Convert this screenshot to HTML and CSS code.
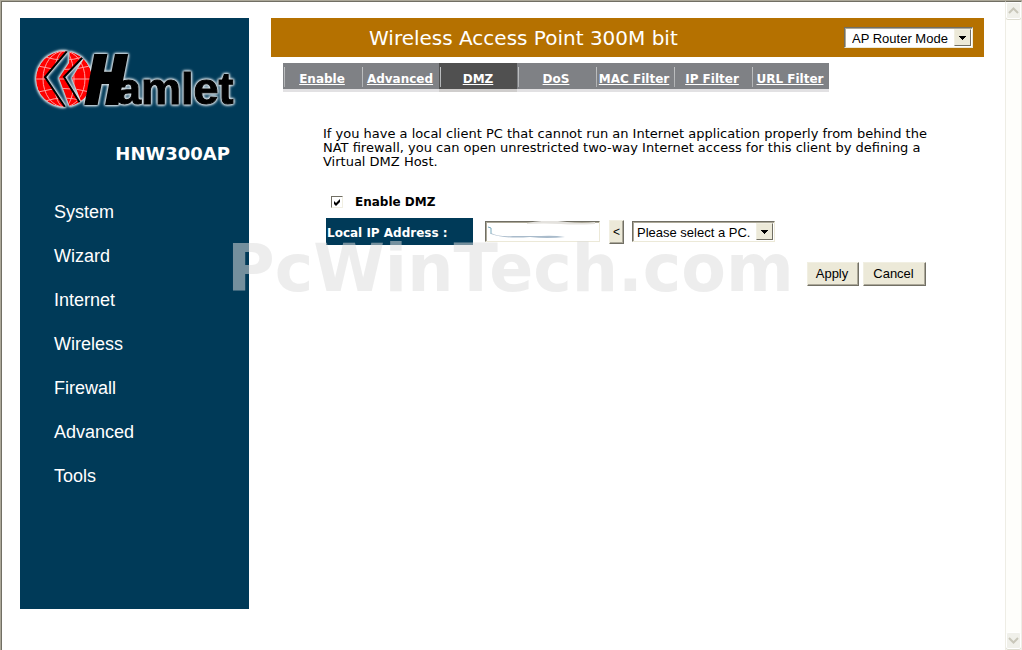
FILE: index.html
```html
<!DOCTYPE html>
<html lang="en">
<head>
  <meta charset="UTF-8">
  <meta name="viewport" content="width=device-width, initial-scale=1.0">
  <title>Wireless Access Point 300M bit</title>
  <link rel="stylesheet" href="styles.css">
</head>
<body>
  <div class="page">
    <div class="sidebar">
      <svg class="logo" width="206" height="66" viewBox="0 0 206 66" role="img" aria-label="Hamlet">
        <defs>
          <clipPath id="globe"><circle cx="30" cy="33" r="28"/></clipPath>
          <clipPath id="slices">
            <path d="M0 0H36L11 31L32 64H0Z"/>
            <path d="M36 0L49 11L30 31L46 57L37 64L25 32L35 17Z"/>
            <path d="M51 11L38 32L48 58H62V11Z"/>
          </clipPath>
        </defs>
        <g class="logo-glow">
          <g clip-path="url(#globe)">
            <g clip-path="url(#slices)">
              <circle cx="30" cy="33" r="28" fill="#f00"/>
              <g fill="none" stroke="#ff9d9d" stroke-width="1">
                <ellipse cx="30" cy="33" rx="21" ry="28"/>
                <ellipse cx="30" cy="33" rx="10" ry="28"/>
                <path d="M2 33H58 M4 20Q30 27 56 20 M4 46Q30 39 56 46 M11 11Q30 17 49 11 M11 55Q30 49 49 55"/>
              </g>
            </g>
            <path fill="none" stroke="#000" stroke-width="2" d="M33 5L11 31L31 61M49 11L30 31L46 57"/>
          </g>
          <text class="logo-cap" x="53" y="57">H</text>
          <text class="logo-text" x="82" y="58">amlet</text>
        </g>
      </svg>
      <div class="model">HNW300AP</div>
      <ul class="menu">
        <li><a href="#">System</a></li>
        <li><a href="#">Wizard</a></li>
        <li><a href="#">Internet</a></li>
        <li><a href="#">Wireless</a></li>
        <li><a href="#">Firewall</a></li>
        <li><a href="#">Advanced</a></li>
        <li><a href="#">Tools</a></li>
      </ul>
    </div>

    <div class="main">
      <header class="title-bar">
        <h1>Wireless Access Point 300M bit</h1>
        <span class="select-box mode">
          <select aria-label="Operation mode">
            <option>AP Router Mode</option>
          </select>
          <svg class="arrow" viewBox="0 0 15 15"><path d="M4 6h7v1h-1v1h-1v1h-1v1h-1v-1h-1v-1h-1v-1h-1z"/></svg>
        </span>
      </header>

      <nav class="tabs">
        <a href="#">Enable</a>
        <a href="#">Advanced</a>
        <a href="#" class="active">DMZ</a>
        <a href="#">DoS</a>
        <a href="#">MAC Filter</a>
        <a href="#">IP Filter</a>
        <a href="#">URL Filter</a>
      </nav>

      <form class="content">
        <p>If you have a local client PC that cannot run an Internet application properly from behind the NAT firewall, you can open unrestricted two-way Internet access for this client by defining a Virtual DMZ Host.</p>

        <div class="enable-row">
          <input type="checkbox" id="enableDmz" checked>
          <label for="enableDmz">Enable DMZ</label>
        </div>

        <div class="ip-row">
          <label for="localIp">Local IP Address :</label>
          <span class="ip-box">
            <input type="text" id="localIp">
            <svg class="smudge" viewBox="0 0 115 21">
              <path d="M3 6l3 1v6" fill="none" stroke="#79aabd" stroke-width="1"/>
              <path d="M6 12Q14 16 28 15H56Q68 14 80 16Q62 18 45 16Q20 18 6 13Z" fill="#a9bbcb"/>
              <path d="M42 2Q62 -2 82 1Q98 3 110 1V3Q90 4 76 3Q58 2 42 3Z" fill="#e4e2de"/>
            </svg>
          </span>
          <button type="button" class="copy">&lt;</button>
          <span class="select-box client">
            <select aria-label="Client PC">
              <option>Please select a PC.</option>
            </select>
            <svg class="arrow" viewBox="0 0 15 15"><path d="M4 6h7v1h-1v1h-1v1h-1v1h-1v-1h-1v-1h-1v-1h-1z"/></svg>
          </span>
        </div>

        <div class="actions">
          <button type="button" class="apply">Apply</button>
          <button type="button" class="cancel">Cancel</button>
        </div>
      </form>
    </div>
  </div>

  <div class="scrollbar">
    <button type="button" aria-label="Scroll up"><svg width="11" height="7" viewBox="0 0 11 7"><path d="M1 6L5.500 1.500L10 6"/></svg></button>
    <button type="button" aria-label="Scroll down"><svg width="11" height="7" viewBox="0 0 11 7"><path d="M1 1L5.500 5.500L10 1"/></svg></button>
  </div>

  <div class="watermark">PcWinTech.com</div>
</body>
</html>
```
FILE: styles.css
```css
* {
  box-sizing: border-box;
}
body {
  margin: 0;
  display: flex;
  min-height: 100vh;
  border-top: 1px solid #aca899;
  border-left: 1px solid #aca899;
  background-color: #fff;
  font-family: "DejaVu Sans", Verdana, sans-serif;
  font-size: 12px;
  color: #000;
}
.page {
  flex: 1;
  display: flex;
  align-items: flex-start;
  gap: 22px;
  padding: 16px 21px 16px 18px;
  border-top: 1px solid #716f64;
  border-left: 1px solid #716f64;
}

/* left side */
.sidebar {
  width: 229px;
  padding: 28px 0 111px;
  background-color: #003a58;
  color: #fff;
}
.logo {
  display: block;
  margin-left: 14px;
  overflow: visible;
}
.logo-glow {
  filter: drop-shadow(0 0 1px #dfe8ec) drop-shadow(0 0 1px #dfe8ec) drop-shadow(0 0 1px #9fb4c0);
}
.logo-cap {
  font: italic bold 64px "DejaVu Sans Mono", monospace;
  stroke: #000;
  stroke-width: 4px;
}
.logo-text {
  font: bold 45px "Liberation Sans", Arial, sans-serif;
  stroke: #000;
  stroke-width: 1px;
}
.model {
  margin-top: 31px;
  padding-right: 19px;
  font-size: 18px;
  line-height: 22px;
  font-weight: bold;
  text-align: right;
}
.menu {
  margin: 25px 0 0;
  padding: 0 0 0 34px;
  list-style: none;
}
.menu a {
  display: block;
  font-family: "Liberation Sans", Arial, sans-serif;
  font-size: 18px;
  line-height: 44px;
  color: #fff;
  text-decoration: none;
}

/* right side */
.main {
  flex: 1;
}
.title-bar {
  display: flex;
  align-items: center;
  justify-content: space-between;
  height: 39px;
  padding: 0 11px 0 98px;
  background-color: #b57100;
  color: #fff;
}
.title-bar h1 {
  margin: 0;
  font-size: 20px;
  font-weight: normal;
}
.tabs {
  display: flex;
  margin: 6px 0 0 12px;
}
.tabs a {
  width: 78px;
  height: 29px;
  padding-top: 4px;
  border-bottom: 3px solid #e2e1e3;
  background: linear-gradient(#c0c2c3, #b0b2b4) 1px 4px / 1px 20px no-repeat padding-box, #7f8185 padding-box;
  font-size: 12px;
  line-height: 24px;
  font-weight: bold;
  text-align: center;
  color: #fff;
}
.tabs a.active {
  border-bottom-color: #cfcdcc;
  background-color: #505050;
}

.content {
  padding: 35px 0 0 52px;
}
.content p {
  max-width: 610px;
  margin: 0;
  font-size: 13px;
  line-height: 14px;
}
.enable-row {
  display: flex;
  align-items: center;
  gap: 12px;
  margin: 25px 0 8px 8px;
  font-weight: bold;
}
.enable-row label {
  padding-top: 1px;
  line-height: 15px;
}
.enable-row input {
  appearance: none;
  width: 12px;
  height: 12px;
  margin: 0;
  border: 1px solid;
  border-color: #716f64 #f1efe2 #f1efe2 #716f64;
}
.enable-row input:checked {
  background: url("data:image/svg+xml,%3Csvg xmlns='http://www.w3.org/2000/svg' viewBox='0 0 10 10'%3E%3Cpath d='M2 4l2 2l4-4v3l-4 4l-2-2z'/%3E%3C/svg%3E");
}
.ip-row {
  display: flex;
  align-items: center;
  margin-left: 3px;
}
.ip-row label {
  width: 147px;
  margin-right: 12px;
  padding: 3px 0 0 1px;
  background-color: #003a58;
  color: #fff;
  font-weight: bold;
  line-height: 24px;
}
.ip-box {
  position: relative;
  display: flex;
  margin-right: 9px;
}
.ip-box input {
  width: 115px;
  height: 21px;
  border: 1px solid;
  border-color: #716f64 #ece9d8 #ece9d8 #716f64;
  box-shadow: inset 1px 1px #aca899;
}
.smudge {
  position: absolute;
  left: 0;
  top: 0;
  width: 115px;
  height: 21px;
  pointer-events: none;
}

button {
  padding: 0;
  border: 1px solid;
  border-color: #f1efe2 #716f64 #716f64 #f1efe2;
  box-shadow: inset -1px -1px #aca899;
  background-color: #ece9d8;
  font-family: "Liberation Sans", Arial, sans-serif;
  font-size: 13px;
  color: #000;
}
.copy {
  width: 15px;
  height: 24px;
  margin-right: 8px;
  font-size: 12px;
}
.select-box {
  position: relative;
  display: flex;
}
.select-box select {
  appearance: none;
  width: 100%;
  height: 21px;
  padding: 1px 20px 0 4px;
  border: 1px solid;
  border-color: #716f64 #ece9d8 #ece9d8 #716f64;
  border-radius: 0;
  box-shadow: inset 1px 1px #aca899;
  background-color: #fff;
  font-family: "Liberation Sans", Arial, sans-serif;
  font-size: 13px;
  color: #000;
}
.select-box .arrow {
  position: absolute;
  right: 2px;
  top: 2px;
  width: 17px;
  height: 17px;
  border: 1px solid;
  border-color: #f1efe2 #716f64 #716f64 #f1efe2;
  background-color: #ece9d8;
  pointer-events: none;
}
.mode {
  width: 129px;
}
.mode select {
  padding-left: 7px;
}
.client {
  width: 143px;
}
.actions {
  display: flex;
  justify-content: flex-end;
  gap: 4px;
  margin: 17px 58px 0 0;
}
.actions button {
  height: 24px;
  padding: 0 2px 1px 0;
}
.apply {
  width: 52px;
}
.cancel {
  width: 63px;
}

.scrollbar {
  display: flex;
  flex-direction: column;
  justify-content: space-between;
  width: 17px;
  padding-bottom: 1px;
  border-top: 1px solid #716f64;
  border-left: 1px solid #eeede5;
  border-right: 1px solid #eeede5;
  background-color: #fefefb;
}
.scrollbar button {
  display: flex;
  align-items: center;
  justify-content: center;
  height: 17px;
  border-color: #fff;
  border-radius: 2px;
  box-shadow: 0 1px #dddcd0;
  background-color: #f0f0ea;
}
.scrollbar path {
  fill: none;
  stroke: #c9c7ba;
  stroke-width: 2;
}

.watermark {
  position: absolute;
  left: 227px;
  top: 232px;
  font-size: 65px;
  line-height: 74px;
  font-weight: bold;
  color: rgba(221, 221, 221, 0.525);
  pointer-events: none;
}
```
